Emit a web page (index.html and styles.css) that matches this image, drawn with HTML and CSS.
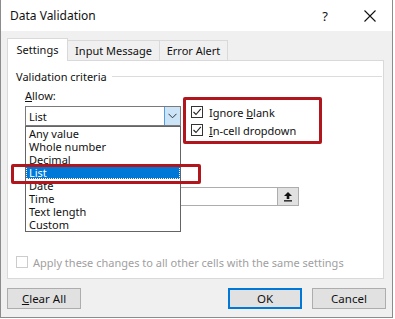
FILE: index.html
```html
<!DOCTYPE html>
<html lang="en">
<head>
  <meta charset="UTF-8" />
  <title>Data Validation</title>
  <link rel="stylesheet" href="styles.css">
</head>
<body>
  <div class="window">
    <div class="titlebar">
      <span class="title">Data Validation</span>
      <span class="help">?</span>
      <svg class="close" width="12" height="12" viewBox="0 0 12 12">
        <path d="M0.5 0.5 L11.5 11.5 M11.5 0.5 L0.5 11.5" stroke="#111" stroke-width="1.1" fill="none"/>
      </svg>
    </div>
    <div class="dialog">
      <div class="tabs">
        <div class="tab active">Settings</div>
        <div class="tab">Input Message</div>
        <div class="tab">Error Alert</div>
      </div>
      <div class="panel">
        <div class="group-title"><span>Validation criteria</span><i class="rule"></i></div>
        <div class="criteria">
          <div class="label"><u>A</u>llow:</div>
          <div class="allow-row">
            <div class="select">
              <span>List</span>
              <span class="drop-btn">
                <svg width="9" height="6" viewBox="0 0 9 6"><path d="M0.5 0.8 L4.5 4.8 L8.5 0.8" stroke="#333" stroke-width="1" fill="none"/></svg>
              </span>
              <ul class="list">
                <li>Any value</li>
                <li>Whole number</li>
                <li>Decimal</li>
                <li class="selected">List</li>
                <li>Date</li>
                <li>Time</li>
                <li>Text length</li>
                <li>Custom</li>
              </ul>
            </div>
            <div class="checks">
              <div class="check">
                <span class="box"><svg width="10" height="10" viewBox="0 0 10 10"><path d="M1.5 5 L4 7.5 L8.8 1.8" stroke="#222" stroke-width="1.1" fill="none"/></svg></span>
                <span>Ignore <u>b</u>lank</span>
              </div>
              <div class="check">
                <span class="box"><svg width="10" height="10" viewBox="0 0 10 10"><path d="M1.5 5 L4 7.5 L8.8 1.8" stroke="#222" stroke-width="1.1" fill="none"/></svg></span>
                <span><u>I</u>n-cell dropdown</span>
              </div>
            </div>
          </div>
          <div class="source">
            <span class="source-btn">
              <svg width="10" height="11" viewBox="0 0 10 11"><path d="M5 1 L9 5 L6.3 5 L6.3 8 L3.7 8 L3.7 5 L1 5 Z" fill="#111"/><rect x="1" y="9.2" width="8" height="1.3" fill="#111"/></svg>
            </span>
          </div>
        </div>
        <div class="apply">
          <span class="box disabled"></span>
          <span>Apply these changes to all other cells with the same settings</span>
        </div>
        <div class="mark mark-list"></div>
        <div class="mark mark-checks"></div>
      </div>
      <div class="buttons">
        <button><u>C</u>lear All</button>
        <div class="right">
          <button class="default">OK</button>
          <button>Cancel</button>
        </div>
      </div>
    </div>
  </div>
</body>
</html>
```

FILE: styles.css
```css
body {
  margin: 0;
  padding: 0;
  background: #ffffff;
  font-family: "Noto Sans", "Open Sans", sans-serif;
  font-size: 11px;
  color: #111111;
}
u {
  text-decoration: underline;
  text-underline-offset: 1px;
}
.window {
  width: 391px;
  height: 317px;
  border: 1px solid #8c8c8c;
  border-top: none;
  background: #f0f0f0;
}
.titlebar {
  height: 31px;
  background: #ffffff;
  display: flex;
  align-items: center;
  padding-left: 9px;
}
.title {
  font-size: 12px;
  flex: 1;
}
.help {
  font-size: 13px;
  margin-right: 36px;
}
.close {
  margin-right: 16px;
}
.dialog {
  padding: 7px 7px 0 6px;
}
.tabs {
  display: flex;
  align-items: flex-end;
  height: 22px;
}
.tab {
  height: 20px;
  box-sizing: border-box;
  border: 1px solid #d9d9d9;
  border-bottom: none;
  border-left: none;
  display: flex;
  align-items: center;
  justify-content: center;
  background: #f0f0f0;
}
.tab:nth-child(2) { width: 92px; }
.tab:nth-child(3) { width: 68px; }
.tab.active {
  width: 61px;
  height: 23px;
  border-left: 1px solid #d9d9d9;
  background: #ffffff;
  margin-bottom: -1px;
  position: relative;
  z-index: 1;
  padding-bottom: 2px;
}
.panel {
  position: relative;
  width: 377px;
  height: 219px;
  box-sizing: border-box;
  border: 1px solid #d9d9d9;
  background: #ffffff;
  padding: 8px 0 0 8px;
}
.group-title {
  display: flex;
  align-items: center;
  height: 14px;
}
.rule {
  flex: 1;
  border-top: 1px solid #dcdcdc;
  margin-left: 5px;
  margin-right: 1px;
}
.criteria {
  padding-left: 9px;
}
.label {
  margin-top: 6px;
  height: 14px;
  line-height: 14px;
}
.allow-row {
  display: flex;
  margin-top: 3px;
  height: 36px;
}
.select {
  position: relative;
  width: 156px;
  height: 20px;
  box-sizing: border-box;
  border: 1px solid #7a7a7a;
  display: flex;
  align-items: center;
  padding-left: 3px;
}
.select span:first-child {
  flex: 1;
}
.drop-btn {
  width: 16px;
  height: 18px;
  box-sizing: border-box;
  background: #cce4f7;
  border-left: 1px solid #569de5;
  display: flex;
  align-items: center;
  justify-content: center;
}
.list {
  position: absolute;
  top: 19px;
  left: -1px;
  width: 156px;
  box-sizing: border-box;
  margin: 0;
  padding: 0;
  list-style: none;
  border: 1px solid #646464;
  background: #ffffff;
  z-index: 2;
}
.list li {
  height: 13px;
  line-height: 13px;
  padding-left: 3px;
}
.list li.selected {
  background: #0078d7;
  color: #ffffff;
  outline: 1px dotted #ffffff;
  outline-offset: -1px;
}
.checks {
  margin-left: 10px;
}
.check {
  display: flex;
  align-items: center;
  height: 12px;
  margin-bottom: 6px;
}
.box {
  width: 12px;
  height: 12px;
  box-sizing: border-box;
  border: 1px solid #333333;
  background: #ffffff;
  display: inline-flex;
  align-items: center;
  justify-content: center;
  margin-right: 6px;
}
.box.disabled {
  border-color: #cccccc;
  margin-right: 5px;
}
.source {
  margin-top: 45px;
  width: 274px;
  height: 19px;
  box-sizing: border-box;
  border: 1px solid #adadad;
  display: flex;
  justify-content: flex-end;
}
.source-btn {
  width: 20px;
  height: 17px;
  background: #e1e1e1;
  border-left: 1px solid #adadad;
  display: flex;
  align-items: center;
  justify-content: center;
}
.apply {
  display: flex;
  align-items: center;
  margin-top: 50px;
  height: 12px;
  color: #a0a0a0;
}
.mark {
  position: absolute;
  border: 3px solid #b0161c;
  border-radius: 2px;
  z-index: 3;
}
.mark-list {
  left: 3px;
  top: 103px;
  width: 184px;
  height: 14px;
}
.mark-checks {
  left: 175px;
  top: 36px;
  width: 133px;
  height: 41px;
}
.buttons {
  display: flex;
  justify-content: space-between;
  margin-top: 9px;
  width: 379px;
}
.right {
  display: flex;
  gap: 10px;
}
button {
  width: 74px;
  height: 21px;
  box-sizing: border-box;
  background: #e1e1e1;
  border: 1px solid #adadad;
  font-family: inherit;
  font-size: 11.5px;
  color: #111111;
  padding: 0;
}
button.default {
  border: 2px solid #0078d7;
}
```
